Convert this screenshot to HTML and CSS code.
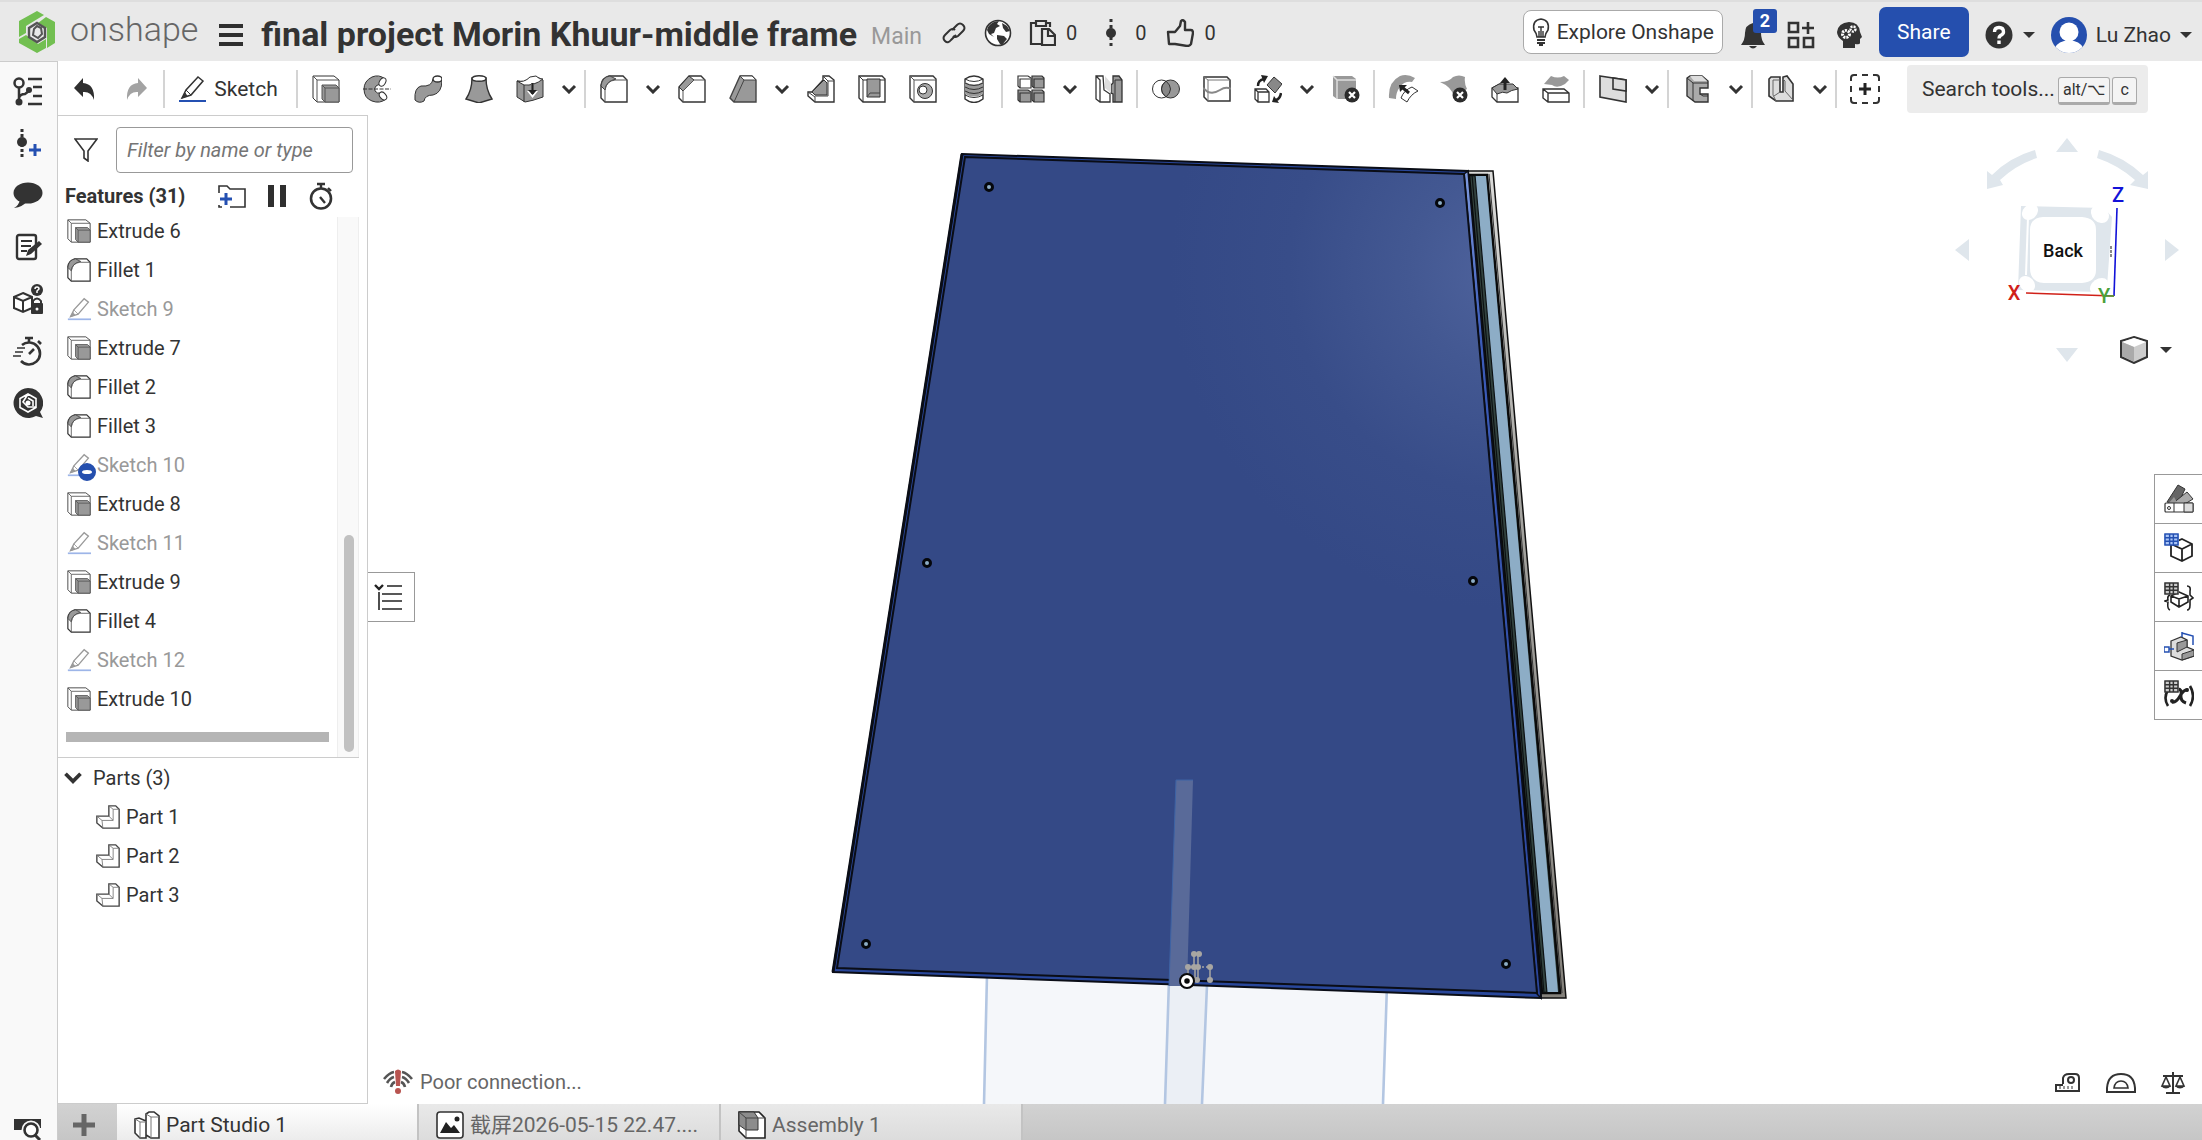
FILE: index.html
```html
<!DOCTYPE html>
<html lang="en">
<head>
<meta charset="utf-8">
<title>final project Morin Khuur-middle frame | Part Studio 1</title>
<link rel="stylesheet" href="styles.css">
</head>
<body>
<svg class="sprite" aria-hidden="true">
  <symbol id="i-extrude" viewBox="0 0 28 28"><path d="M1 1H22L27 5V27H5L1 23Z" fill="#fff" stroke="#333"/><path d="M1 1L5 5V27M5 5H27" fill="none" stroke="#555"/><path d="M10 10H24L27 13V27H13L10 24Z" fill="#999" stroke="#555"/><path d="M10 10L13 13V27M13 13H27" fill="none" stroke="#555"/></symbol>
  <symbol id="i-fillet" viewBox="0 0 28 28"><path d="M9 1H23L27 5V27H5L1 23V10Q2 3 9 1Z" fill="#fff" stroke="#333" stroke-width="1.4"/><path d="M1 11Q2 2 10 1L16 4Q6 6 5 15Z" fill="#999" stroke="#444"/><path d="M5 27V15Q6 6 15 5H27" fill="none" stroke="#555"/></symbol>
  <symbol id="i-pencil" viewBox="0 0 28 28"><path d="M4 23L8 15L20 2L25 6L13 20Z" fill="#fff" stroke="currentColor" stroke-width="1.5"/><path d="M8 15L13 20M4 23L7 18L9 21Z" fill="currentColor" stroke="currentColor"/><path d="M1 26H28" class="pen-line" stroke-width="2"/></symbol>
  <symbol id="i-part" viewBox="0 0 28 28"><path d="M15 1H23L27 5V27H8L1 21V13H15Z" fill="#fff" stroke="#444" stroke-width="1.6"/><path d="M1 13L7 18H20V5H27M15 1L20 5M15 13L20 18M7 18L8 27" fill="none" stroke="#777"/></symbol>
  <symbol id="i-down" viewBox="0 0 16 10"><path d="M2 2L8 8L14 2" fill="none" stroke="currentColor" stroke-width="3"/></symbol>
  <symbol id="i-caret" viewBox="0 0 12 8"><path d="M0 1H12L6 7Z" fill="#333"/></symbol>
  <symbol id="i-grid" viewBox="0 0 16 14"><path d="M1 1H15V13H1ZM1 5H15M1 9H15M6 1V13M10 1V13" fill="none" stroke="currentColor" stroke-width="1.6"/></symbol>
</svg>

<header class="topbar">
  <a class="brand" href="#" aria-label="Onshape">
    <svg width="38" height="42" viewBox="0 0 38 42"><path d="M19 0L26 4L8 15V22L1 26V10Z" fill="#72bf51"/><path d="M28 6L37 11V32L29 37V17L20 12Z" fill="#72bf51"/><path d="M1 28L8 24L20 33L28 28V37L19 42L1 32Z" fill="#72bf51"/><path d="M19 12L27 17V26L19 31L11 26V17Z" fill="none" stroke="#555" stroke-width="2.4"/><path d="M19 15L16 18L15 24L20 27L24 23L23 17Z" fill="none" stroke="#555" stroke-width="2"/></svg>
    <span>onshape</span>
  </a>
  <button class="icon-btn menu" aria-label="Menu"><svg width="24" height="24" viewBox="0 0 24 24"><path d="M0 3H24M0 12H24M0 21H24" stroke="#2f2f2f" stroke-width="4"/></svg></button>
  <h1>final project Morin Khuur-middle frame</h1>
  <span class="branch">Main</span>
  <div class="doc-tools">
    <button class="icon-btn" aria-label="Link"><svg width="28" height="28" viewBox="0 0 28 28"><g fill="none" stroke="#333" stroke-width="2"><path d="M12 11L17 6Q20 3 23 6Q26 9 23 12L18 17Q15 19 13 17"/><path d="M16 16L11 21Q8 25 5 22Q2 19 5 16L10 11Q13 9 15 11"/></g></svg></button>
    <button class="icon-btn" aria-label="Public"><svg width="28" height="28" viewBox="0 0 28 28"><circle cx="14" cy="14" r="12.5" fill="#fff" stroke="#333" stroke-width="1.6"/><path d="M4 8Q8 2 15 2L13 5L16 7L12 9L10 14L7 15L10 18L5 15L3 11ZM13 16L20 17L23 20L18 26L16 25L13 20ZM18 4L23 7L26 12L22 13L19 9Z" fill="#333"/></svg></button>
    <button class="count"><svg width="28" height="28" viewBox="0 0 28 28"><path d="M8 4H3V25H13M18 4H22V8M8 2H18V7H8ZM14 10H21L27 16V26H14ZM20 10V17H27" fill="none" stroke="#333" stroke-width="2.2"/></svg>0</button>
    <button class="count"><svg width="28" height="28" viewBox="0 0 28 28"><circle cx="14" cy="14" r="5" fill="#333"/><path d="M14 0V28" stroke="#333" stroke-width="3" stroke-dasharray="3 3"/></svg>0</button>
    <button class="count"><svg width="28" height="28" viewBox="0 0 28 28"><path d="M2 13H9L14 7L15 2Q17 0 19 3V11H25Q27 11 27 14L25 25Q24 27 21 27L9 25H3Z" fill="none" stroke="#333" stroke-width="2.4" stroke-linejoin="round"/></svg>0</button>
  </div>
  <div class="account">
    <button class="explore"><svg width="18" height="28" viewBox="0 0 18 28"><path d="M5 19Q5 16 2 12Q0 2 9 1Q18 2 16 12Q13 16 13 19Z" fill="#fff" stroke="#333" stroke-width="1.6"/><path d="M6 9H12M9 9V19M7 19V13M11 19V13" stroke="#333" stroke-width="1.4" fill="none"/><path d="M5 22H13M5 25H13M7 27H11" stroke="#333" stroke-width="2"/></svg>Explore Onshape</button>
    <div class="icon-set">
      <button class="icon-btn bell" aria-label="Notifications"><svg width="28" height="28" viewBox="0 0 28 28"><path d="M14 2Q22 4 22 12Q22 19 26 24H2Q6 19 6 12Q6 4 14 2ZM10 25H18Q14 30 10 25Z" fill="#333"/></svg><span class="badge">2</span></button>
      <button class="icon-btn" aria-label="Applications"><svg width="28" height="28" viewBox="0 0 28 28"><path d="M2 2H11V11H2ZM2 17H11V26H2ZM17 17H26V26H17ZM21 1V13M15 7H27" fill="none" stroke="#333" stroke-width="2.6"/></svg></button>
      <button class="icon-btn" aria-label="Learning"><svg width="28" height="28" viewBox="0 0 28 28"><path d="M8 27V20Q2 16 2 11Q3 2 14 1Q24 1 25 11L27 16L25 18V22Q25 24 20 23V27Z" fill="#333"/><circle cx="11" cy="13" r="3.5" fill="none" stroke="#fff" stroke-width="3" stroke-dasharray="2 1"/><circle cx="18" cy="8" r="2.5" fill="none" stroke="#fff" stroke-width="2.4" stroke-dasharray="2 1"/></svg></button>
    </div>
    <button class="share">Share</button>
    <button class="help" aria-label="Help"><svg width="28" height="28" viewBox="0 0 28 28"><circle cx="14" cy="14" r="13.5" fill="#333"/><path d="M9.500 11Q9.500 6.500 14 6.500T18.500 11Q18.500 13 15.500 14.500Q14 15.500 14 17.500M14 19.500V23" fill="none" stroke="#fff" stroke-width="3.4"/></svg><svg width="12" height="8"><use href="#i-caret"/></svg></button>
    <button class="user"><svg width="36" height="36" viewBox="0 0 36 36"><clipPath id="av"><circle cx="18" cy="18" r="18"/></clipPath><g clip-path="url(#av)"><path d="M0 0H36V36H0Z" fill="#254fae"/><circle cx="18" cy="15" r="9.500" fill="#fff"/><path d="M2 36Q4 26 13 24H23Q32 26 34 36Z" fill="#fff"/></g></svg><span>Lu Zhao</span><svg width="12" height="8"><use href="#i-caret"/></svg></button>
  </div>
</header>

<div class="workspace">
  <nav class="rail" aria-label="Panels">
    <button aria-label="Feature list"><svg width="30" height="30" viewBox="0 0 30 30"><g fill="none" stroke="#333"><circle cx="6" cy="7" r="4.500" stroke-width="2.500"/><path d="M6 12V25M6 22Q7 18 12 18L16 15" stroke-width="2.500"/><path d="M15 3H29M20 11H29M20 20H29M15 28H29" stroke-width="2.600"/></g><circle cx="6" cy="26" r="3.500" fill="#333"/><circle cx="16" cy="14" r="3" fill="#333"/></svg></button>
    <button aria-label="Versions"><svg width="30" height="30" viewBox="0 0 30 30"><circle cx="9" cy="14" r="5" fill="#333"/><path d="M9 1V29" stroke="#333" stroke-width="3" stroke-dasharray="3 2"/><path d="M22 16V28M16 22H28" stroke="#2450b2" stroke-width="3"/></svg></button>
    <button aria-label="Comments"><svg width="30" height="30" viewBox="0 0 30 30"><ellipse cx="15" cy="13" rx="14.500" ry="10.500" fill="#333"/><path d="M7 20Q6 25 1 28Q10 27 14 21Z" fill="#333"/></svg></button>
    <button aria-label="Notes"><svg width="30" height="30" viewBox="0 0 30 30"><rect x="4" y="3" width="19" height="24" rx="2" fill="#fff" stroke="#333" stroke-width="2.400"/><path d="M8 9H19M8 14H18M8 19H14" stroke="#333" stroke-width="2"/><path d="M13 24L15 18L26 9L29 12L18 22Z" fill="#333"/></svg></button>
    <button aria-label="Configurations"><svg width="30" height="30" viewBox="0 0 30 30"><path d="M10 9L19 13V24L10 28L1 24V13ZM1 13L10 17L19 13M10 17V28" fill="#fff" stroke="#333" stroke-width="2"/><circle cx="24" cy="6" r="6" fill="#333"/><path d="M22 5Q22 3 24 3T26 5L24 7V9" fill="none" stroke="#fff" stroke-width="1.500"/><rect x="18" y="19" width="12" height="11" rx="1" fill="#333"/><path d="M20 19V17Q24 12 28 17V19" fill="none" stroke="#333" stroke-width="2"/><circle cx="24" cy="25" r="1.500" fill="#fff"/></svg></button>
    <button aria-label="Performance"><svg width="30" height="30" viewBox="0 0 30 30"><path d="M9 9A11 11 0 1 1 8 25M12 2H20M16 2V6M25 5L28 8M16 18L21 13" fill="none" stroke="#333" stroke-width="2.600"/><path d="M4 12H12M2 16H10M0 20H8" stroke="#333" stroke-width="1.600"/></svg></button>
    <button aria-label="Ask Onshape"><svg width="30" height="30" viewBox="0 0 30 30"><path d="M15 0A15 15 0 0 1 27 24L30 30L23 28A15 15 0 1 1 15 0Z" fill="#333"/><path d="M15 6L23 10.500V19.500L15 24L7 19.500V10.500ZM15 6L10 14L15 19L23 19M15 10L20 13V18" fill="none" stroke="#fff" stroke-width="1.600"/><circle cx="15" cy="15" r="2.500" fill="#fff"/></svg></button>
    <button class="rail-end" aria-label="Search tabs"><svg width="30" height="24" viewBox="0 0 30 24"><path d="M1 3H28V12H1ZM1 12H9V14H1Z" fill="#333"/><circle cx="18" cy="14" r="7" fill="#f9f9f9" stroke="#f9f9f9" stroke-width="5"/><circle cx="18" cy="14" r="6.500" fill="#fff" stroke="#333" stroke-width="2.600"/><path d="M22 19L27 24" stroke="#333" stroke-width="3"/></svg></button>
  </nav>

  <div class="stage">
    <div class="toolbar" role="toolbar">
      <button class="tool" aria-label="Undo"><svg width="22" height="24" viewBox="0 0 22 24"><path d="M9 1V6Q21 7 20 23Q17 14 9 15V20L0 11Z" fill="#2f2f2f"/></svg></button>
      <button class="tool" aria-label="Redo"><svg width="22" height="24" viewBox="0 0 22 24"><path d="M13 1V6Q1 7 2 23Q5 14 13 15V20L22 11Z" fill="#a3a3a3"/></svg></button>
      <span class="sep"></span>
      <button class="sketch"><svg width="28" height="28"><use href="#i-pencil"/></svg>Sketch</button>
      <span class="sep"></span>
      <button class="tool" aria-label="Extrude"><svg width="28" height="28"><use href="#i-extrude"/></svg></button>
      <button class="tool" aria-label="Revolve"><svg width="28" height="28" viewBox="0 0 28 28"><path d="M22 4Q16 -1 9 2Q1 6 1 14Q1 23 9 26Q17 29 23 24L18 18Q14 19 12 16Q11 13 13 11Q15 9 18 10Z" fill="#999" stroke="#333"/><ellipse cx="19.500" cy="7" rx="3" ry="4.500" transform="rotate(30 19.500 7)" fill="#fff" stroke="#333"/><ellipse cx="20" cy="21" rx="3" ry="4.500" transform="rotate(-40 20 21)" fill="#fff" stroke="#333"/><path d="M0 14H28" stroke="#333" stroke-dasharray="4 1.500"/></svg></button>
      <button class="tool" aria-label="Sweep"><svg width="28" height="28" viewBox="0 0 28 28"><path d="M1 25Q0 13 7 11Q18 12 19 4L28 5Q28 18 19 20Q11 20 10 26Q5 29 1 25Z" fill="#999" stroke="#333"/><ellipse cx="23.500" cy="4" rx="4.500" ry="3" fill="#fff" stroke="#333" stroke-width="1.400"/></svg></button>
      <button class="tool" aria-label="Loft"><svg width="28" height="28" viewBox="0 0 28 28"><path d="M7 3Q7 15 1 24L14 28L27 24Q21 15 21 3Z" fill="#999" stroke="#333" stroke-width="1.400"/><ellipse cx="14" cy="3.500" rx="7" ry="2.800" fill="#fff" stroke="#333" stroke-width="1.400"/></svg></button>
      <button class="tool" aria-label="Thicken"><svg width="28" height="28" viewBox="0 0 28 28"><path d="M1 6Q8 8 14 4T27 5V22Q16 26 9 27L1 22Z" fill="#999" stroke="#333"/><path d="M1 6Q8 8 14 2L20 1Q24 5 27 4Q18 11 8 10Z" fill="#fff" stroke="#333"/><path d="M8 10V27" stroke="#333"/><path d="M15 9H18V16H22L16.500 23L11 16H15Z" fill="#fff"/><path d="M16.500 8V19" stroke="#222" stroke-width="2.500"/><path d="M12 15H21L16.500 20Z" fill="#222"/></svg></button>
      <button class="drop" aria-label="More"><svg width="16" height="10"><use href="#i-down"/></svg></button>
      <span class="sep"></span>
      <button class="tool" aria-label="Fillet"><svg width="28" height="28"><use href="#i-fillet"/></svg></button>
      <button class="drop" aria-label="More"><svg width="16" height="10"><use href="#i-down"/></svg></button>
      <button class="tool" aria-label="Chamfer"><svg width="28" height="28" viewBox="0 0 28 28"><path d="M11 1H23L27 5V27H5L1 23V12Z" fill="#fff" stroke="#333" stroke-width="1.400"/><path d="M1 12L11 1L16 5L5 16Z" fill="#999" stroke="#333"/><path d="M5 27V16L16 5H27" fill="none" stroke="#555"/></svg></button>
      <button class="tool" aria-label="Draft"><svg width="28" height="28" viewBox="0 0 28 28"><path d="M11 1H23L27 5V27H5L1 23Z" fill="#999" stroke="#444" stroke-width="1.400"/><path d="M11 1H23L27 5H15Z" fill="#fff" stroke="#444"/><path d="M5 27L15 5" stroke="#444"/></svg></button>
      <button class="drop" aria-label="More"><svg width="16" height="10"><use href="#i-down"/></svg></button>
      <button class="tool" aria-label="Rib"><svg width="28" height="28" viewBox="0 0 28 28"><path d="M16 1H22L27 5V27H8L1 21V17H5L16 5Z" fill="#fff" stroke="#333" stroke-width="1.400"/><path d="M5 17L17 5L20 8V20H8Z" fill="#999" stroke="#333"/><path d="M16 1L21 6V21H8M21 6H27M1 17L8 22V27" fill="none" stroke="#444"/></svg></button>
      <button class="tool" aria-label="Shell"><svg width="28" height="28" viewBox="0 0 28 28"><path d="M1 1H24L27 4V27H5L1 23Z" fill="#fff" stroke="#333" stroke-width="1.400"/><path d="M1 1L5 5V27M5 5H27" fill="none" stroke="#333"/><path d="M9 4H22V22H9Z" fill="#999" stroke="#333"/><path d="M9 22L12 18H22" fill="none" stroke="#444"/></svg></button>
      <button class="tool" aria-label="Hole"><svg width="28" height="28" viewBox="0 0 28 28"><path d="M1 1H24L27 4V27H5L1 23Z" fill="#fff" stroke="#333" stroke-width="1.400"/><path d="M1 1L5 5V27M5 5H27" fill="none" stroke="#555"/><circle cx="16" cy="16" r="7.500" fill="#aaa" stroke="#333"/><circle cx="14" cy="15" r="4" fill="#fff" stroke="#333"/></svg></button>
      <button class="tool" aria-label="Thread"><svg width="28" height="28" viewBox="0 0 28 28"><path d="M5 4V24Q14 31 23 24V4Q14 -2 5 4Z" fill="#fff" stroke="#333" stroke-width="1.400"/><path d="M5 7Q14 12 23 7V19Q14 24 5 19Z" fill="#999"/><path d="M5 4Q14 9 23 4M5 8Q14 13 23 8M5 12Q14 17 23 12M5 16Q14 21 23 16M5 20Q14 25 23 20" fill="none" stroke="#333"/></svg></button>
      <span class="sep"></span>
      <button class="tool" aria-label="Pattern"><svg width="28" height="28" viewBox="0 0 28 28"><g stroke="#333" stroke-width="1.200"><path d="M1 1H11L14 3V13H3L1 11Z" fill="#fff"/><path d="M15 1H25L27 3V13H17L15 11Z" fill="#999"/><path d="M1 15H11L14 17V27H3L1 25Z" fill="#999"/><path d="M15 15H25L27 17V27H17L15 25Z" fill="#999"/><path d="M3 13V4H13M17 13V4H27M3 27V18H13M17 27V18H27" fill="none"/></g></svg></button>
      <button class="drop" aria-label="More"><svg width="16" height="10"><use href="#i-down"/></svg></button>
      <button class="tool" aria-label="Mirror"><svg width="28" height="28" viewBox="0 0 28 28"><path d="M1 1H8L9 15L15 19V27H5L1 24ZM1 1L5 5V27" fill="#fff" stroke="#333" stroke-width="1.300"/><path d="M18 1H24L27 5V27H18V19L16 18V10L18 8Z" fill="#999" stroke="#333" stroke-width="1.300"/><path d="M10 1L16 8V18L10 13Z" fill="#ddd"/><path d="M20 5V27M20 5H27" fill="none" stroke="#333"/></svg></button>
      <span class="sep"></span>
      <button class="tool" aria-label="Boolean"><svg width="28" height="28" viewBox="0 0 28 28"><circle cx="9.500" cy="14" r="9" fill="#fff" stroke="#333"/><circle cx="18.500" cy="14" r="9" fill="#999" stroke="#333"/><path d="M14 6Q5 14 14 22Q23 14 14 6Z" fill="#888" stroke="#333"/></svg></button>
      <button class="tool" aria-label="Split"><svg width="28" height="28" viewBox="0 0 28 28"><path d="M1 2H24L27 5V26H5L1 22Z" fill="#fff" stroke="#333" stroke-width="1.500"/><path d="M1 2L5 5H27M5 5V26" fill="none" stroke="#777"/><path d="M0 13L5 17Q11 19 17 15T28 14" fill="none" stroke="#888" stroke-width="2"/></svg></button>
      <button class="tool" aria-label="Transform"><svg width="28" height="28" viewBox="0 0 28 28"><path d="M1 14H12L15 17V27H4L1 24ZM1 14L4 17V27M4 17H15" fill="#fff" stroke="#333" stroke-width="1.300"/><path d="M20 2L28 9L21 18L13 10Z" fill="#888" stroke="#333"/><path d="M4 11Q4 5 10 4M27 18Q26 24 22 25" fill="none" stroke="#222" stroke-width="2.500"/><path d="M7 0L14 1L10 8ZM18 27L25 28L20 21Z" fill="#222"/></svg></button>
      <button class="drop" aria-label="More"><svg width="16" height="10"><use href="#i-down"/></svg></button>
      <button class="tool" aria-label="Delete part"><svg width="28" height="28" viewBox="0 0 28 28"><path d="M1 1H20L24 4V24H5L1 21Z" fill="#999"/><path d="M1 1L5 5V24M5 5H24" fill="none" stroke="#ddd" stroke-width="1.500"/><circle cx="20" cy="20" r="7.500" fill="#2c2c2c"/><path d="M17 17L23 23M23 17L17 23" stroke="#fff" stroke-width="2.200"/></svg></button>
      <span class="sep"></span>
      <button class="tool" aria-label="Modify fillet"><svg width="30" height="30" viewBox="0 0 30 30"><path d="M1 24Q0 8 12 2Q19 -1 27 4L24 8Q16 7 12 13Q8 18 8 25Z" fill="#999"/><path d="M13 24Q16 16 24 13L30 17Q23 20 19 28Z" fill="#fff" stroke="#333"/><path d="M15 14L21 19" stroke="#222" stroke-width="3"/><path d="M11 11H19L12 18Z" fill="#222"/></svg></button>
      <button class="tool" aria-label="Delete face"><svg width="28" height="28" viewBox="0 0 28 28"><path d="M0 7Q9 7 13 2Q19 -1 25 2Q24 8 27 14L14 22Q12 12 0 7Z" fill="#999"/><circle cx="20" cy="20" r="7.500" fill="#2c2c2c"/><path d="M17 17L23 23M23 17L17 23" stroke="#fff" stroke-width="2.200"/></svg></button>
      <button class="tool" aria-label="Move face"><svg width="28" height="28" viewBox="0 0 28 28"><path d="M1 13L9 9L27 13V27H6L1 22Z" fill="#fff" stroke="#333" stroke-width="1.300"/><path d="M1 13L8 9H22L27 14Q20 15 16 18Q12 16 6 19Z" fill="#999" stroke="#333"/><path d="M6 19V27" stroke="#333"/><path d="M14 15V6" stroke="#222" stroke-width="3"/><path d="M9 8L14 2L19 8Z" fill="#222"/></svg></button>
      <button class="tool" aria-label="Replace face"><svg width="28" height="28" viewBox="0 0 28 28"><path d="M2 9L9 1Q16 4 22 1L27 5L23 9Q15 14 10 10Z" fill="#999"/><path d="M1 14H22L27 18V27H6L1 23ZM1 14L6 18V27M6 18H27" fill="#fff" stroke="#333" stroke-width="1.400"/></svg></button>
      <span class="sep"></span>
      <button class="tool" aria-label="Sheet metal"><svg width="28" height="28" viewBox="0 0 28 28"><path d="M1 1L27 5V27L1 22Z" fill="#ddd" stroke="#333" stroke-width="1.600"/><path d="M14 3V14L27 16V5Z" fill="#ddd" stroke="#333" stroke-width="1.600"/></svg></button>
      <button class="drop" aria-label="More"><svg width="16" height="10"><use href="#i-down"/></svg></button>
      <span class="sep"></span>
      <button class="tool" aria-label="Frame"><svg width="28" height="28" viewBox="0 0 28 28"><path d="M4 3L7 1H19L25 6V13H17V19H25V27H12L4 21Z" fill="#aaa" stroke="#333" stroke-width="1.400"/><path d="M4 3L10 8H25M10 8V26M17 19L20 21H25" fill="none" stroke="#333"/><path d="M7 1H19L24 6H11Z" fill="#ddd"/></svg></button>
      <button class="drop" aria-label="More"><svg width="16" height="10"><use href="#i-down"/></svg></button>
      <span class="sep"></span>
      <button class="tool" aria-label="Bend"><svg width="28" height="28" viewBox="0 0 28 28"><path d="M2 4L4 2H13V17H16V2L20 1L26 9V26H9L2 21Z" fill="#ddd" stroke="#333" stroke-width="1.600"/><path d="M6 5V20L9 26M6 5H13M16 4L18 6V16L26 25M13 17L7 21" fill="none" stroke="#666"/></svg></button>
      <button class="drop" aria-label="More"><svg width="16" height="10"><use href="#i-down"/></svg></button>
      <span class="sep"></span>
      <button class="tool" aria-label="Add custom features"><svg width="32" height="32" viewBox="0 0 32 32"><path d="M2 8V5Q2 2 5 2H8M24 2H27Q30 2 30 5V8M30 24V27Q30 30 27 30H24M8 30H5Q2 30 2 27V24M13 2H19M13 30H19M2 13V19M30 13V19" fill="none" stroke="#333" stroke-width="2"/><path d="M16 10V22M10 16H22" stroke="#222" stroke-width="3"/></svg></button>
      <label class="search"><input type="text" placeholder="Search tools..." aria-label="Search tools"><kbd>alt/⌥</kbd><kbd>c</kbd></label>
    </div>

    <div class="work">
      <aside class="panel">
        <div class="filter">
          <svg width="24" height="24" viewBox="0 0 24 24"><path d="M1 1H23L14 13V23L10 20V13Z" fill="#fff" stroke="#333" stroke-width="1.600"/></svg>
          <input type="text" placeholder="Filter by name or type" aria-label="Filter by name or type">
        </div>
        <div class="panel-head">
          <h2>Features (31)</h2>
          <button class="icon-btn" aria-label="Add folder"><svg width="28" height="24" viewBox="0 0 28 24"><path d="M1 9V2H9L12 5H27V23H12M1 21V23H4" fill="none" stroke="#333" stroke-width="1.600"/><path d="M8 9V21M2 15H14" stroke="#2450b2" stroke-width="3"/></svg></button>
          <button class="icon-btn" aria-label="Pause"><svg width="18" height="22" viewBox="0 0 18 22"><path d="M0 0H6V22H0ZM12 0H18V22H12Z" fill="#2f2f2f"/></svg></button>
          <button class="icon-btn" aria-label="Timing"><svg width="26" height="28" viewBox="0 0 26 28"><circle cx="13" cy="16.500" r="10" fill="#fff" stroke="#333" stroke-width="2.600"/><path d="M9 2H17M13 2V7M20 6L23 9M12 15L17 21" stroke="#333" stroke-width="2.400"/></svg></button>
        </div>
        <div class="feature-area">
          <div class="feature-main">
            <ul class="features">
              <li><svg width="24" height="24"><use href="#i-extrude"/></svg>Extrude 6</li>
              <li><svg width="24" height="24"><use href="#i-fillet"/></svg>Fillet 1</li>
              <li class="off"><svg width="24" height="24"><use href="#i-pencil"/></svg>Sketch 9</li>
              <li><svg width="24" height="24"><use href="#i-extrude"/></svg>Extrude 7</li>
              <li><svg width="24" height="24"><use href="#i-fillet"/></svg>Fillet 2</li>
              <li><svg width="24" height="24"><use href="#i-fillet"/></svg>Fillet 3</li>
              <li class="off"><svg width="24" height="24"><use href="#i-pencil"/></svg><span class="minus"></span>Sketch 10</li>
              <li><svg width="24" height="24"><use href="#i-extrude"/></svg>Extrude 8</li>
              <li class="off"><svg width="24" height="24"><use href="#i-pencil"/></svg>Sketch 11</li>
              <li><svg width="24" height="24"><use href="#i-extrude"/></svg>Extrude 9</li>
              <li><svg width="24" height="24"><use href="#i-fillet"/></svg>Fillet 4</li>
              <li class="off"><svg width="24" height="24"><use href="#i-pencil"/></svg>Sketch 12</li>
              <li><svg width="24" height="24"><use href="#i-extrude"/></svg>Extrude 10</li>
            </ul>
            <div class="rollback"></div>
          </div>
          <div class="track"><div class="thumb"></div></div>
        </div>
        <div class="parts">
          <button class="parts-head"><svg width="20" height="13"><use href="#i-down"/></svg>Parts (3)</button>
          <ul>
            <li><svg width="24" height="24"><use href="#i-part"/></svg>Part 1</li>
            <li><svg width="24" height="24"><use href="#i-part"/></svg>Part 2</li>
            <li><svg width="24" height="24"><use href="#i-part"/></svg>Part 3</li>
          </ul>
        </div>
      </aside>

      <main class="viewport">
        <svg class="model" viewBox="368 115 1834 989" preserveAspectRatio="xMidYMid slice" role="img" aria-label="Part model">
          <defs>
            <radialGradient id="shine" gradientUnits="userSpaceOnUse" cx="1510" cy="270" r="340"><stop offset="0" stop-color="#4f639d"/><stop offset=".3" stop-color="#435892"/><stop offset=".65" stop-color="#384d89"/><stop offset="1" stop-color="#344986"/></radialGradient>
            <linearGradient id="edge" x1="0" y1="0" x2="0" y2="1"><stop offset="0" stop-color="#7f9be0"/><stop offset=".2" stop-color="#3c5cb8"/><stop offset="1" stop-color="#2b469c"/></linearGradient>
            <linearGradient id="rim" x1="0" y1="0" x2="0" y2="1"><stop offset="0" stop-color="#dcdcda"/><stop offset=".4" stop-color="#a5a4a0"/><stop offset="1" stop-color="#85827c"/></linearGradient>
          </defs>
          <path d="M987 975L984 1104H1383L1387 985Z" fill="#f5f7fa"/>
          <path d="M1169 980L1165 1104H1202L1207 985Z" fill="#ebeff5"/>
          <path d="M987 975L984 1104M1169 980L1165 1104M1207 985L1202 1104M1387 985L1383 1104" fill="none" stroke="#b3c6e2" stroke-width="2.600"/>
          <path d="M1468 171L1493 171L1566 998L1541 998Z" fill="url(#rim)" stroke="#111" stroke-width="1.500"/>
          <path d="M1469 175H1487L1560 993H1542Z" fill="#33433f" stroke="#0a0a0a" stroke-width="2.500"/>
          <path d="M1475 176H1486L1558 992H1547Z" fill="#8dadc6"/>
          <path d="M1472 175L1544 993M1475 175L1547 993" stroke="#0d1214" stroke-width="1.200"/>
          <path d="M1489 174L1562 993" stroke="#333" stroke-width="1"/>
          <path d="M962 154L1468 171L1541 998L833 972Z" fill="#29479a" stroke="#0a0d16" stroke-width="2"/>
          <path d="M1464 174L1468 171L1541 998L1537 994Z" fill="url(#edge)" stroke="#0a0d16" stroke-width="1.500"/>
          <path d="M965 157L1464 174L1537 993L837 968Z" fill="url(#shine)" stroke="#0a0d16" stroke-width="2"/>
          <path d="M962 154L833 972" stroke="#0a0d16" stroke-width="3"/>
          <path d="M1176 780H1193L1187 986H1169Z" fill="#596a99"/><path d="M1169 986L1176 780H1193" fill="none" stroke="#3d63a5"/>
          <g fill="#8dadc6" stroke="#05070c" stroke-width="3"><circle cx="989" cy="187" r="3.500"/><circle cx="1440" cy="203" r="3.500"/><circle cx="927" cy="563" r="3.500"/><circle cx="1473" cy="581" r="3.500"/><circle cx="866" cy="944" r="3.500"/><circle cx="1506" cy="964" r="3.500"/></g>
          <g fill="none" stroke="#a8a6a2" stroke-width="1.500"><path d="M1194 954V967M1198 954V980M1188 967V980M1195 967V980M1210 967V980M1188 967H1198"/><path d="M1198 967H1210" stroke-dasharray="2 2"/></g>
          <g fill="#a8a6a2"><circle cx="1194" cy="954" r="3"/><circle cx="1199" cy="954" r="3"/><circle cx="1188" cy="967" r="3"/><circle cx="1194" cy="967" r="3"/><circle cx="1198" cy="967" r="3"/><circle cx="1210" cy="967" r="3"/><circle cx="1197" cy="980" r="3"/><circle cx="1210" cy="980" r="3"/></g>
          <circle cx="1187" cy="981" r="4.500" fill="#0a0a0a" stroke="#fff" stroke-width="3.500"/><circle cx="1187" cy="981" r="7" fill="none" stroke="#0a0a0a" stroke-width="2"/>
        </svg>

        <button class="collapse" aria-label="Toggle feature list"><svg width="30" height="28" viewBox="0 0 30 28"><path d="M1 2L5 6L9 2" fill="none" stroke="#222" stroke-width="2.400"/><path d="M5 9V27M13 3H28M8 11H28M8 18H28M8 26H28" stroke="#222" stroke-width="1.600"/></svg></button>

        <div class="view-cube">
          <svg width="262" height="260" viewBox="0 0 262 260">
            <g fill="#dfe6ec"><path d="M127 18L138 32H116ZM127 242L138 228H116ZM15 130L29 119V141ZM239 130L225 119V141Z"/><path d="M95 30L97 38Q76 45 60 60L63 65L47 69V51L52 55Q70 37 95 30ZM159 30L157 38Q178 45 195 60L190 65L208 69V51L203 55Q184 37 159 30Z"/><path fill-rule="evenodd" d="M81 86L164 88L172 97L167 167L160 172L78 170ZM103 97Q90 98 90 110V148Q90 162 104 163H142Q156 162 156 150V110Q156 98 142 97Z"/></g>
            <path d="M88 97L86 155" stroke="#fff" stroke-width="2"/>
            <g fill="#fff"><ellipse cx="90" cy="92" rx="9" ry="7" transform="rotate(-45 90 92)"/><ellipse cx="160" cy="94" rx="10" ry="8" transform="rotate(45 160 94)"/><ellipse cx="87" cy="164" rx="9" ry="7" transform="rotate(45 87 164)"/><ellipse cx="159" cy="166" rx="10" ry="7" transform="rotate(-35 159 166)"/></g>
            <path d="M171 126V138" stroke="#888" stroke-width="2" stroke-dasharray="3 1"/>
            <path d="M177 88L174 176" stroke="#1212d8" stroke-width="1.600"/><path d="M86 173L174 176" stroke="#d02018" stroke-width="1.600"/><path d="M164 176H174" stroke="#4ba03a" stroke-width="1.600"/>
            <text x="123" y="137" class="face">Back</text>
            <text x="74" y="180" class="axis ax">X</text><text x="164" y="183" class="axis ay">Y</text><text x="178" y="82" class="axis az">Z</text>
          </svg>
          <button class="shade" aria-label="Display mode"><svg width="28" height="28" viewBox="0 0 28 28"><path d="M14 1L27 5V21L14 27L1 21V5Z" fill="#ccc" stroke="#333" stroke-width="2"/><path d="M14 2L26 6L14 11L2 6Z" fill="#fff"/><path d="M2 6L14 11V26L2 20Z" fill="#aaa"/></svg><svg width="12" height="8"><use href="#i-caret"/></svg></button>
        </div>

        <div class="side-tools">
          <button aria-label="Appearance"><svg width="30" height="30" viewBox="0 0 30 30"><path d="M3 18L14 1L21 5L14 20Z" fill="#666" stroke="#333"/><path d="M8 20L23 8L29 15L16 23Z" fill="#aaa" stroke="#333"/><path d="M4 20L10 13L14 20Z" fill="#999"/><rect x="1" y="19" width="28" height="9" rx="1" fill="#fff" stroke="#333" stroke-width="1.200"/><path d="M20 19H29V28H20Z" fill="#ddd" stroke="#333"/><path d="M10 19V28" stroke="#333"/><circle cx="5" cy="24" r="1.500" fill="none" stroke="#333"/></svg></button>
          <button aria-label="Configuration"><svg width="30" height="30" viewBox="0 0 30 30"><path d="M18 6L28 11V23L18 28L7 23V11ZM7 11L18 16L28 11M18 16V28" fill="#fff" stroke="#222" stroke-width="1.800"/><path d="M0 1H15V12H0Z" fill="#a9c4f5"/><svg class="blue" x="0" y="0" width="15" height="13"><use href="#i-grid"/></svg></svg></button>
          <button aria-label="Configured part properties"><svg width="30" height="30" viewBox="0 0 30 30"><path d="M15 10L24 14V20L15 25L7 20V14ZM7 14L15 17L24 14M15 17V25" fill="#fff" stroke="#222" stroke-width="1.600"/><path d="M6 13Q3 14 4 18L1 19L4 20Q3 27 6 28M23 4Q27 4 26 9V13L29 16L26 18V23Q26 28 23 28" fill="none" stroke="#222" stroke-width="1.600"/><path d="M0 1H15V12H0Z" fill="#ccc"/><svg x="0" y="0" width="15" height="13"><use href="#i-grid"/></svg></svg></button>
          <button aria-label="Model based definition"><svg width="30" height="30" viewBox="0 0 30 30"><path d="M7 10L17 6L23 9V16L30 19V25L18 29L7 25Z" fill="#ddd" stroke="#333" stroke-width="1.300"/><path d="M13 12L23 9V16L13 21Z" fill="#999" stroke="#333"/><path d="M18 23L30 19V25L18 29Z" fill="#999" stroke="#333"/><path d="M0 16H5V21H0ZM5 18H10M18 1V6M18 2L29 5V14" fill="none" stroke="#2450b2" stroke-width="1.500"/></svg></button>
          <button aria-label="Variables"><svg width="30" height="30" viewBox="0 0 30 30"><path d="M4 10Q-1 18 4 26M26 6Q32 16 26 26" fill="none" stroke="#222" stroke-width="2.600"/><path d="M14 9Q18 9 17 15T22 23M24 10Q20 9 16 16T8 22" fill="none" stroke="#222" stroke-width="3"/><circle cx="23" cy="10" r="2" fill="#222"/><circle cx="8" cy="21" r="2" fill="#222"/><path d="M0 1H15V12H0Z" fill="#ccc"/><svg x="0" y="0" width="15" height="13"><use href="#i-grid"/></svg></svg></button>
        </div>

        <div class="status"><svg width="30" height="26" viewBox="0 0 30 26"><path d="M1 10Q6 4 11 3M4 14Q7 9 11 8M8 18Q9 14 12 13M29 10Q24 4 19 3M26 14Q23 9 19 8M22 18Q21 14 18 13" fill="none" stroke="#555" stroke-width="2.600"/><path d="M12 2Q15 -1 18 2L17 17H13Z" fill="#b85450"/><circle cx="15" cy="22" r="3" fill="#b85450"/></svg>Poor connection...</div>

        <div class="measure">
          <button aria-label="Measure"><svg width="28" height="24" viewBox="0 0 28 24"><path d="M9 13V7Q10 3 15 3H21Q25 3 25 7V20H2V14H9" fill="#fff" stroke="#333" stroke-width="2"/><circle cx="17" cy="9" r="3" fill="#fff" stroke="#333" stroke-width="2"/><path d="M6 15V18M10 15V18M14 15V18M18 15V18" stroke="#333"/></svg></button>
          <button aria-label="Angle"><svg width="30" height="24" viewBox="0 0 30 24"><path d="M1 21V17Q2 3 15 3T29 17V21Z" fill="#fff" stroke="#333" stroke-width="2"/><path d="M8 17Q9 10 15 10T22 17Z" fill="none" stroke="#333" stroke-width="1.600"/></svg></button>
          <button aria-label="Mass properties"><svg width="26" height="24" viewBox="0 0 26 24"><path d="M13 1V21M6 22H20M3 5H23" stroke="#333" stroke-width="2"/><path d="M6 6L2 15H10ZM20 6L16 15H24Z" fill="none" stroke="#333" stroke-width="1.600"/><path d="M1 15H11Q6 20 1 15ZM15 15H25Q20 20 15 15Z" fill="#333"/></svg></button>
        </div>
      </main>
    </div>

    <footer class="tabs">
      <button class="add" aria-label="Add tab"><svg width="24" height="24" viewBox="0 0 24 24"><path d="M12 1V23M1 12H23" stroke="#666" stroke-width="5"/></svg></button>
      <button class="tab active"><svg width="26" height="28" viewBox="0 0 26 28"><path d="M1 8L5 7L12 10V27H6L1 22ZM12 3L15 1H20L25 5V27H17L12 24Z" fill="#fff" stroke="#333" stroke-width="1.600"/><path d="M1 8L6 11V27M6 11H12M12 3L17 6V27M17 6H25" fill="none" stroke="#777"/></svg><span>Part Studio 1</span></button>
      <button class="tab"><svg width="28" height="28" viewBox="0 0 28 28"><rect x="1" y="1" width="26" height="26" rx="3" fill="#fff" stroke="#333" stroke-width="1.600"/><path d="M4 22L10 11L15 17L18 14L24 22Z" fill="#222"/><circle cx="21" cy="8" r="2.500" fill="#222"/></svg><span>截屏2026-05-15 22.47....</span></button>
      <button class="tab"><svg width="28" height="28" viewBox="0 0 28 28"><path d="M1 1H21L27 7V27H8L1 20Z" fill="#fff" stroke="#222" stroke-width="1.600"/><path d="M1 1H16L20 7V19H8L1 14Z" fill="#8c8c8c" stroke="#333"/><path d="M1 1L8 7H27M8 7V27" fill="none" stroke="#444"/></svg><span>Assembly 1</span></button>
    </footer>
  </div>
</div>
</body>
</html>
```
FILE: styles.css
```css
* { box-sizing: border-box; }
body {
  margin: 0;
  min-height: 100vh;
  display: flex;
  flex-direction: column;
  font: 20px/24px Roboto, "Noto Sans CJK SC", sans-serif;
  color: #333;
  background: #fff;
}
button, input, kbd { font: inherit; color: inherit; }
button { padding: 0; border: 0; background: none; display: flex; align-items: center; justify-content: center; white-space: nowrap; }
ul { margin: 0; padding: 0; list-style: none; }
svg { display: block; flex: none; }
.sprite { position: absolute; width: 0; height: 0; }
.pen-line { stroke: var(--pen, #2450b2); }

/* top bar */
.topbar {
  height: 61px;
  display: flex;
  align-items: center;
  padding: 0 10px 0 18px;
  background: #e9e9e9;
  border-top: 2px solid #dedede;
}
.brand { display: flex; align-items: center; gap: 14px; color: #666; text-decoration: none; }
.brand span { font-size: 34px; line-height: 40px; font-weight: 300; padding-bottom: 6px; }
.menu { margin: 6px 18px 0 21px; }
h1 { margin: 0; font-size: 34px; line-height: 40px; font-weight: 700; white-space: nowrap; padding-top: 4px; }
.branch { margin-left: 14px; font-size: 23px; color: #999; padding-top: 10px; }
.doc-tools { display: flex; align-items: center; gap: 16px; margin-left: 18px; padding-top: 3px; }
.count { gap: 10px; margin-right: 4px; }
.account { margin-left: auto; display: flex; align-items: center; gap: 16px; font-size: 21px; }
.explore { width: 200px; height: 44px; gap: 7px; background: #fff; border: 1px solid #aaa; border-radius: 8px; }
.icon-set { display: flex; gap: 20px; padding-top: 6px; }
.bell { position: relative; }
.badge {
  position: absolute; left: 14px; top: -12px; width: 24px; height: 24px;
  border-radius: 3px; background: #254fae; color: #fff; font-size: 18px; font-weight: 700;
}
.share { width: 90px; height: 50px; border-radius: 7px; background: #254fae; color: #fff; }
.help { gap: 10px; padding-top: 6px; }
.user { gap: 9px; padding-top: 6px; }

/* frame */
.workspace { flex: 1; display: flex; min-height: 0; }
.rail {
  width: 58px;
  flex: none;
  display: flex;
  flex-direction: column;
  padding: 3px 2px 0 0;
  background: #f9f9f9;
  border-right: 1px solid #ccc;
  border-top: 1px solid #ccc;
}
.rail button { height: 52px; }
.rail .rail-end { height: 24px; margin-top: auto; }
.stage { flex: 1; min-width: 0; display: flex; flex-direction: column; }

/* toolbar */
.toolbar { height: 54px; display: flex; align-items: center; padding: 2px 0 0 1px; font-size: 21px; }
.tool { width: 51px; height: 48px; flex: none; }
.drop { width: 27px; height: 48px; flex: none; }
.sep { width: 6px; height: 38px; flex: none; border-left: 2px solid #fff; border-right: 2px solid #fff; background: #d4d4d4; }
.sketch { width: 127px; height: 48px; gap: 8px; padding-right: 5px; }
.search {
  display: flex; align-items: center; gap: 2px;
  width: 241px; height: 48px; margin-left: 17px; padding-left: 15px;
  background: #ececec; border-radius: 4px;
}
.search input { width: 134px; padding: 0; border: 0; background: none; }
.search input::placeholder { color: #333; opacity: 1; }
kbd {
  height: 28px; padding: 0 4px; margin-top: 4px;
  border: 1px solid #aaa; border-bottom-width: 3px; border-radius: 3px;
  background: #f4f4f4; font-size: 16px; line-height: 24px;
}
kbd:last-child { padding: 0 7px; }

/* feature panel */
.work { flex: 1; display: flex; min-height: 0; }
.panel { width: 310px; flex: none; border: 1px solid #ccc; border-left: 0; padding-top: 11px; background: #fff; }
.filter { display: flex; align-items: center; gap: 18px; padding: 0 14px 0 16px; }
.filter input { flex: 1; min-width: 0; height: 46px; padding: 0 10px; border: 1px solid #999; border-radius: 4px; background: #fff; font-style: italic; font-synthesis: style; }
.filter input::placeholder { color: #757575; opacity: 1; }
.panel-head { height: 38px; display: flex; align-items: center; padding: 8px 33px 0 7px; gap: 22px; }
h2 { margin: 0; flex: 1; font-size: 20px; font-weight: 700; white-space: nowrap; }
.feature-area { display: flex; margin-right: 8px; border-bottom: 1px solid #ccc; }
.feature-main { flex: 1; }
.features li, .parts li { height: 39px; display: flex; align-items: center; gap: 6px; padding-left: 9px; position: relative; }
.features .off { color: #999; --pen: #9db5e8; }
.minus {
  position: absolute; left: 20px; top: 18px; width: 18px; height: 18px;
  border: 5px solid #254fae; border-width: 7px 4px; border-radius: 9px; background: #fff;
}
.rollback { height: 10px; margin: 14px 8px 15px; background: #b5b5b5; }
.track { width: 22px; margin-top: 6px; padding: 0 4px 5px 6px; display: flex; align-items: flex-end; background: #f9f9f9; border: 1px solid #eee; border-width: 0 1px; }
.thumb { width: 12px; height: 217px; border-radius: 6px; background: #c1c1c1; }
.parts-head { height: 39px; gap: 10px; padding-left: 5px; }
.parts li { padding-left: 38px; }

/* viewport and overlays */
.viewport { flex: 1; min-width: 0; position: relative; overflow: hidden; }
.model { position: absolute; inset: 0; width: 100%; height: 100%; }
.collapse { position: absolute; left: 0; top: 457px; width: 47px; height: 50px; background: #fff; border: 1px solid #999; border-left: 0; padding-right: 4px; }
.view-cube { position: absolute; right: 0; top: 5px; }
.face { font-size: 18px; font-weight: 500; text-anchor: middle; fill: #111; }
.axis { font-size: 20px; font-weight: 500; text-anchor: middle; }
.ax { fill: #d02018; }
.ay { fill: #4ba03a; }
.az { fill: #1212d8; }
.shade { position: absolute; right: 30px; bottom: 16px; gap: 12px; }
.side-tools { position: absolute; right: 0; top: 359px; width: 48px; border: 1px solid #999; border-right: 0; background: #999; display: grid; gap: 1px; }
.side-tools button { height: 48px; background: #fff; }
.blue { color: #2450b2; }
.status { position: absolute; left: 15px; bottom: 9px; display: flex; align-items: center; gap: 7px; color: #666; }
.measure { position: absolute; right: 16px; bottom: 9px; display: flex; gap: 24px; }

/* document tabs */
.tabs { height: 36px; display: flex; font-size: 21px; background: linear-gradient(#d2d2d2, #c6c6c6); }
.add { width: 59px; padding: 6px 8px 0 0; }
.tab { width: 302px; justify-content: flex-start; gap: 6px; padding: 6px 0 0 17px; color: #666; background: linear-gradient(#e9e9e9, #dcdcdc); border-right: 2px solid #c3c3c3; }
.active { color: #333; background: linear-gradient(#fff, #ececec); }
```
